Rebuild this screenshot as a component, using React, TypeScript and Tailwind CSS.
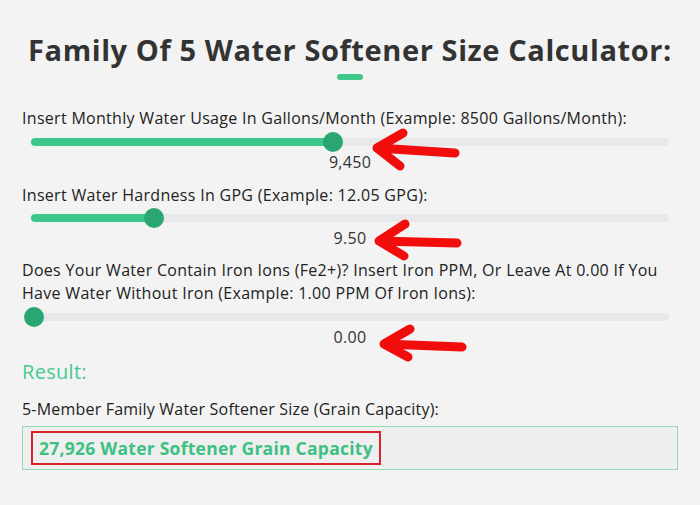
import React from 'react';

const font = { fontFamily: '"Open Sans", "Liberation Sans", sans-serif' };

interface SliderProps {
  percent: number;
  value: string;
}

function Slider({ percent, value }: SliderProps) {
  return (
    <>
      <div className="flex h-[20px] items-center px-[9px]">
        <div className="relative h-[8px] w-full rounded-full bg-[#e8e8e8]">
          <div
            className="absolute left-0 top-0 h-full rounded-full bg-[#3cc88a]"
            style={{ width: `${percent}%` }}
          />
          <div
            className="absolute top-1/2 h-[20px] w-[20px] -translate-x-1/2 -translate-y-1/2 rounded-full bg-[#2aa673]"
            style={{ left: `${percent}%` }}
          />
        </div>
      </div>
      <div className="text-center text-[16px] leading-[20px] tracking-[0.3px] text-[#333]">{value}</div>
    </>
  );
}

export default function App() {
  return (
    <div className="relative h-[505px] w-[700px] overflow-hidden bg-[#f3f3f3] px-[22px] pt-[32px]" style={font}>
      <h1 className="text-center text-[29px] font-bold leading-[36px] tracking-[0.6px] text-[#333]">
        Family Of 5 Water Softener Size Calculator:
      </h1>
      <div className="mx-auto mt-[6px] h-[6px] w-[26px] rounded-full bg-[#3ec98a]" />

      {/* Monthly usage */}
      <div className="mt-[27px] text-[16px] leading-[23px] tracking-[0.3px] text-[#222]">
        Insert Monthly Water Usage In Gallons/Month (Example: 8500 Gallons/Month):
      </div>
      <div className="mt-[2px]">
        <Slider percent={47.3} value="9,450" />
      </div>

      {/* Hardness */}
      <div className="mt-[12px] text-[16px] leading-[23px] tracking-[0.3px] text-[#222]">
        Insert Water Hardness In GPG (Example: 12.05 GPG):
      </div>
      <div className="mt-[1px]">
        <Slider percent={19.3} value="9.50" />
      </div>

      {/* Iron */}
      <div className="mt-[11px] pr-[20px] text-[16px] leading-[23px] tracking-[0.3px] text-[#222]">
        Does Your Water Contain Iron Ions (Fe2+)? Insert Iron PPM, Or Leave At 0.00 If You Have Water Without Iron (Example: 1.00 PPM Of Iron Ions):
      </div>
      <div className="mt-[2px]">
        <Slider percent={0.4} value="0.00" />
      </div>

      {/* Result */}
      <div className="mt-[12px] text-[20px] leading-[26px] tracking-[0.3px] text-[#47c98f]">Result:</div>
      <div className="mt-[13px] text-[16px] leading-[23px] tracking-[0.2px] text-[#222]">
        5-Member Family Water Softener Size (Grain Capacity):
      </div>
      <div className="mt-[5px] flex h-[44px] items-center border border-[#8fdcb2] bg-[#efefef] px-[8px]">
        <div className="flex h-[34px] w-fit items-center whitespace-nowrap border-2 border-[#d9222a] px-[6px] text-[17.5px] font-bold tracking-[0.25px] text-[#3dc083]">
          27,926 Water Softener Grain Capacity
        </div>
      </div>

      {/* annotation arrows */}
      <svg className="pointer-events-none absolute left-0 top-0" width="700" height="505">
        <g fill="none" stroke="#f20d0d" strokeWidth="9" strokeLinecap="round" strokeLinejoin="round">
          <path d="M403 133 L377 148 L400 166 M377 148 L455 153" />
          <path d="M405 224 L379 241 L404 256 M379 241 L457 243" />
          <path d="M410 329 L384 344 L408 357 M384 344 L462 347" />
        </g>
      </svg>
    </div>
  );
}
